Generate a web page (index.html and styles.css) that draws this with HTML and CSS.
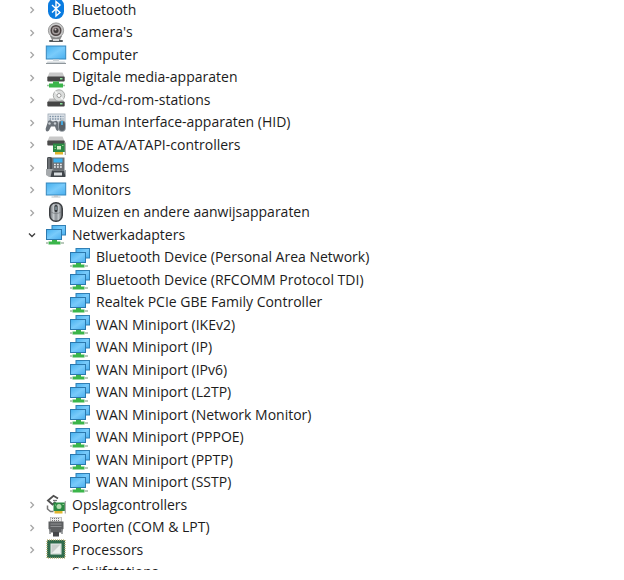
FILE: index.html
```html
<!DOCTYPE html>
<html lang="nl">
<head>
  <meta charset="UTF-8" />
  <meta name="viewport" content="width=device-width, initial-scale=1.0"/>
  <title>Apparaatbeheer</title>
  <link rel="stylesheet" href="styles.css">
</head>
<body>
  <!-- icon shapes, used by the rows below -->
  <svg class="defs" aria-hidden="true">
    <defs>
      <linearGradient id="screen" x1="0" y1="0" x2="1" y2="1">
        <stop offset="0" stop-color="#45b0ee"/>
        <stop offset=".5" stop-color="#79cbfb"/>
        <stop offset="1" stop-color="#48aeee"/>
      </linearGradient>
      <linearGradient id="metal" x1="0" y1="0" x2="0" y2="1">
        <stop offset="0" stop-color="#d4d4d4"/>
        <stop offset="1" stop-color="#8c8c8c"/>
      </linearGradient>
      <linearGradient id="mouseBody" x1="0" y1="0" x2="1" y2="0">
        <stop offset="0" stop-color="#64686c"/>
        <stop offset=".3" stop-color="#c4c9cd"/>
        <stop offset=".5" stop-color="#8b9095"/>
        <stop offset=".7" stop-color="#c0c5c9"/>
        <stop offset="1" stop-color="#5c6064"/>
      </linearGradient>

      <symbol id="chevron-right" viewBox="0 0 12 12">
        <path d="M4.500 3 7.500 6 4.500 9" fill="none" stroke="#a6a6a6" stroke-width="1.300"/>
      </symbol>
      <symbol id="chevron-down" viewBox="0 0 12 12">
        <path d="M3 4.500 6 7.500 9 4.500" fill="none" stroke="#404040" stroke-width="1.400"/>
      </symbol>

      <symbol id="bluetooth" viewBox="0 0 22 22" overflow="visible">
        <rect x="3" y="-1" width="16" height="21" rx="7.500" fill="#0a7be0"/>
        <path d="M7 6l8 7.500-4 3.500V2.500L15 6l-8 7.500" fill="none" stroke="#fff" stroke-width="1.400"/>
      </symbol>

      <symbol id="camera" viewBox="0 0 22 22">
        <path d="M5 14h12l-2 4H7z" fill="#8a8a8a"/>
        <rect x="4" y="18" width="14" height="2" rx="1" fill="#55595c"/>
        <rect x="8" y="17" width="6" height="2" fill="#d5d5d5"/>
        <circle cx="11" cy="8.500" r="7.600" fill="#c9c9c9" stroke="#858585" stroke-width=".8"/>
        <circle cx="11" cy="8.500" r="4.800" fill="#a39c9c" stroke="#4c4444" stroke-width="1.500"/>
        <circle cx="11" cy="8.500" r="2.500" fill="#3d3838"/>
        <circle cx="10.500" cy="7.500" r="1" fill="#c9bdbd"/>
      </symbol>

      <symbol id="computer" viewBox="0 0 22 22">
        <rect x="1.300" y="2" width="19.400" height="13" fill="url(#screen)" stroke="#3687bd"/>
        <rect x="8" y="15.500" width="6" height="1.500" fill="#cfd6da"/>
        <path d="M2.500 17.500h17l1.500 2H1z" fill="#cfd5d9"/>
        <path d="M1 19.500h20" stroke="#8f979c"/>
      </symbol>

      <symbol id="media" viewBox="0 0 22 22">
        <path d="M4.500 5.500h13l2 4.500h-17z" fill="#c9c9c9"/>
        <rect x="2.300" y="9.500" width="17.400" height="5" rx="1" fill="#454545"/>
        <rect x="15" y="11" width="2.500" height="1.500" fill="#8be29b"/>
        <path d="M8 14.500h6v2h4v4h-14v-4h4z" fill="#3bb54a"/>
        <path d="M2 18.500h2M18 18.500h2" stroke="#9bbf9f" stroke-width="1.500"/>
      </symbol>

      <symbol id="dvd" viewBox="0 0 22 22">
        <path d="M4.500 9.500h13l2 4h-17z" fill="#bdbdbd"/>
        <circle cx="14" cy="6.500" r="5.700" fill="#dcdedd" stroke="#a3a5a4" stroke-width=".9"/>
        <path d="M14 6.500 10 2.500M14 6.500l4 4" stroke="#f8f8f8" stroke-width="1.500"/>
        <circle cx="14" cy="6.500" r="2" fill="#fff" stroke="#9b9b9b"/>
        <rect x="2.300" y="12.500" width="17.400" height="5" rx="1" fill="#454545"/>
        <rect x="15" y="14" width="2.500" height="1.500" fill="#8be29b"/>
      </symbol>

      <symbol id="hid" viewBox="0 0 22 22">
        <rect x="3" y="2" width="17" height="8" fill="#e6eaee" stroke="#9aa6b2" stroke-width=".8"/>
        <path d="M4.500 4.500h14M4.500 7h14" stroke="#7b8fa3" stroke-width="1.400" stroke-dasharray="1.600 1"/>
        <path d="M3 9.500c2-2 3-1 4 0h2c2-1.500 3-1 4 1l1 6c0 3-2 3-3 1l-1-3H6l-2 4c-2 2-3.500 1-3.300-2z" fill="#6a7178"/>
        <circle cx="4.500" cy="11.500" r="1.200" fill="#c7cdd2"/>
        <circle cx="10" cy="11.500" r="1.200" fill="#c7cdd2"/>
        <rect x="13.500" y="8.500" width="7" height="11" rx="3.500" fill="#596168" stroke="#a9b0b7" stroke-width=".7"/>
        <path d="M17 9v4" stroke="#45b3ef" stroke-width="1.700"/>
      </symbol>

      <symbol id="ide" viewBox="0 0 22 22">
        <path d="M4.500 2.500h13l2 4.500h-17z" fill="#c9c9c9"/>
        <rect x="2.300" y="6.500" width="17.400" height="5" rx="1" fill="#4b4b4b"/>
        <rect x="8" y="9.500" width="12" height="8.500" fill="#2b8a43"/>
        <path d="M20.300 8.500V21" stroke="#a5a5a5" stroke-width="1.200"/>
        <rect x="12" y="12" width="4" height="3.500" fill="#d5edc9"/>
        <path d="M9.500 12h1.500M9.500 14.500h1.500M17 11.500h1.500" stroke="#91d08c"/>
        <rect x="10" y="18" width="8" height="2.500" fill="#e0b52e"/>
      </symbol>

      <symbol id="modem" viewBox="0 0 22 22">
        <path d="M2.500.5h17v13h-17z" fill="#6b7075"/>
        <rect x="2" y="0" width="5" height="13" rx="1.500" fill="#4b4f53"/>
        <path d="M4 1v11" stroke="#8f9397"/>
        <rect x="8.500" y="1.500" width="9" height="4" fill="#3db0ee"/>
        <path d="M9 7.500h9M9 10h9" stroke="#e9edf0" stroke-width="1.500" stroke-dasharray="1.800 1.200"/>
        <path d="M1 12h6l2 1h12v6l-2 1H4l-3-2z" fill="#a6aaad"/>
        <path d="M7 13.500h12l1.500 6.500h-15z" fill="#41464b"/>
        <rect x="9" y="15.500" width="8" height="3" fill="#d9dde0"/>
      </symbol>

      <symbol id="monitor" viewBox="0 0 22 22">
        <rect x="1.300" y="4" width="19.400" height="12" fill="url(#screen)" stroke="#3687bd"/>
        <path d="M9 16.500h4v1H9z" fill="#a9b1b6"/>
        <path d="M6.500 18h9" stroke="#b8c1c6"/>
      </symbol>

      <symbol id="mouse" viewBox="0 0 22 22">
        <rect x="4.700" y=".7" width="12.600" height="18.600" rx="6" fill="url(#mouseBody)" stroke="#3b3e41" stroke-width="1.400"/>
        <path d="M6 10c3 2 7 2 10 0" fill="none" stroke="#7a7e82" stroke-width=".8"/>
        <rect x="9.500" y="3" width="3" height="7" rx="1.500" fill="#2f3235"/>
        <path d="M11 4.500v3.500" stroke="#b9d6e6"/>
      </symbol>

      <symbol id="network" viewBox="0 0 22 22">
        <rect x="7" y="1.500" width="13.500" height="9.500" fill="url(#screen)" stroke="#3180b5"/>
        <rect x="1.500" y="5.500" width="15" height="10" fill="url(#screen)" stroke="#2c79ae"/>
        <path d="M7 16h5v1.500h3.500v3h-12v-3H7z" fill="#3bb54a"/>
        <path d="M1 19h2.500M15.500 19h3.500" stroke="#b9c9bb" stroke-width="1.800"/>
      </symbol>

      <symbol id="storage" viewBox="0 0 22 22">
        <path d="M13 4.500 8.500 1.800 3 6.500l4.500 4 3-2.500" fill="none" stroke="#505050" stroke-width="1.900"/>
        <path d="M8 6.500h4" stroke="#777" stroke-width="1.300"/>
        <path d="M2.500 11.500v3.500l3 2.500h3" fill="none" stroke="#777" stroke-width="1.500"/>
        <rect x="8.500" y="8.500" width="11.500" height="8.500" fill="#2b8a43"/>
        <path d="M20.300 7v12.500" stroke="#a5a5a5" stroke-width="1.200"/>
        <circle cx="14" cy="12.500" r="2.500" fill="#b6dcb0"/>
        <path d="M10 11h1M17.500 10.500H19" stroke="#91d08c"/>
        <rect x="9.500" y="17" width="8" height="2.500" fill="#e0b52e"/>
      </symbol>

      <symbol id="port" viewBox="0 0 22 22">
        <rect x="5.500" y=".2" width="11" height="4.800" fill="#ededed" stroke="#a5a5a5" stroke-width=".7"/>
        <path d="M7 1.500h8M7 3.500h8" stroke="#777" stroke-dasharray="1 1"/>
        <path d="M3.500 4.500h15v7l-2 4h-11l-2-4z" fill="#5d5f61"/>
        <path d="M5.500 7h11M5.500 9.500h11" stroke="#8e9092"/>
        <path d="M5 12v5M17 12v5" stroke="#85888a" stroke-width="1.500"/>
        <rect x="8" y="15" width="6" height="4.500" fill="#45474a"/>
      </symbol>

      <symbol id="processor" viewBox="0 0 22 22">
        <rect x="2" y="1" width="18" height="18" fill="#396b50" stroke="#bdb67c" stroke-width="1.500" stroke-dasharray="1 1"/>
        <rect x="2.800" y="1.800" width="16.400" height="16.400" fill="#2f6b4b"/>
        <rect x="6" y="5" width="10" height="10" fill="#c9cfcc" stroke="#e6ece9"/>
        <path d="M7 14 15 6v8z" fill="#eef1ef"/>
      </symbol>
    </defs>
  </svg>

  <main class="window">
    <ul class="tree">
      <li><div class="row"><button class="toggle" aria-label="Bluetooth" aria-expanded="false"><svg><use href="#chevron-right"/></svg></button><svg class="icon"><use href="#bluetooth"/></svg><span>Bluetooth</span></div></li>
      <li><div class="row"><button class="toggle" aria-label="Camera's" aria-expanded="false"><svg><use href="#chevron-right"/></svg></button><svg class="icon"><use href="#camera"/></svg><span>Camera's</span></div></li>
      <li><div class="row"><button class="toggle" aria-label="Computer" aria-expanded="false"><svg><use href="#chevron-right"/></svg></button><svg class="icon"><use href="#computer"/></svg><span>Computer</span></div></li>
      <li><div class="row"><button class="toggle" aria-label="Digitale media-apparaten" aria-expanded="false"><svg><use href="#chevron-right"/></svg></button><svg class="icon"><use href="#media"/></svg><span>Digitale media-apparaten</span></div></li>
      <li><div class="row"><button class="toggle" aria-label="Dvd-/cd-rom-stations" aria-expanded="false"><svg><use href="#chevron-right"/></svg></button><svg class="icon"><use href="#dvd"/></svg><span>Dvd-/cd-rom-stations</span></div></li>
      <li><div class="row"><button class="toggle" aria-label="Human Interface-apparaten (HID)" aria-expanded="false"><svg><use href="#chevron-right"/></svg></button><svg class="icon"><use href="#hid"/></svg><span>Human Interface-apparaten (HID)</span></div></li>
      <li><div class="row"><button class="toggle" aria-label="IDE ATA/ATAPI-controllers" aria-expanded="false"><svg><use href="#chevron-right"/></svg></button><svg class="icon"><use href="#ide"/></svg><span>IDE ATA/ATAPI-controllers</span></div></li>
      <li><div class="row"><button class="toggle" aria-label="Modems" aria-expanded="false"><svg><use href="#chevron-right"/></svg></button><svg class="icon"><use href="#modem"/></svg><span>Modems</span></div></li>
      <li><div class="row"><button class="toggle" aria-label="Monitors" aria-expanded="false"><svg><use href="#chevron-right"/></svg></button><svg class="icon"><use href="#monitor"/></svg><span>Monitors</span></div></li>
      <li><div class="row"><button class="toggle" aria-label="Muizen en andere aanwijsapparaten" aria-expanded="false"><svg><use href="#chevron-right"/></svg></button><svg class="icon"><use href="#mouse"/></svg><span>Muizen en andere aanwijsapparaten</span></div></li>
      <li>
        <div class="row"><button class="toggle" aria-label="Netwerkadapters" aria-expanded="true"><svg><use href="#chevron-down"/></svg></button><svg class="icon"><use href="#network"/></svg><span>Netwerkadapters</span></div>
        <ul class="devices">
          <li class="row"><svg class="icon"><use href="#network"/></svg><span>Bluetooth Device (Personal Area Network)</span></li>
          <li class="row"><svg class="icon"><use href="#network"/></svg><span>Bluetooth Device (RFCOMM Protocol TDI)</span></li>
          <li class="row"><svg class="icon"><use href="#network"/></svg><span>Realtek PCIe GBE Family Controller</span></li>
          <li class="row"><svg class="icon"><use href="#network"/></svg><span>WAN Miniport (IKEv2)</span></li>
          <li class="row"><svg class="icon"><use href="#network"/></svg><span>WAN Miniport (IP)</span></li>
          <li class="row"><svg class="icon"><use href="#network"/></svg><span>WAN Miniport (IPv6)</span></li>
          <li class="row"><svg class="icon"><use href="#network"/></svg><span>WAN Miniport (L2TP)</span></li>
          <li class="row"><svg class="icon"><use href="#network"/></svg><span>WAN Miniport (Network Monitor)</span></li>
          <li class="row"><svg class="icon"><use href="#network"/></svg><span>WAN Miniport (PPPOE)</span></li>
          <li class="row"><svg class="icon"><use href="#network"/></svg><span>WAN Miniport (PPTP)</span></li>
          <li class="row"><svg class="icon"><use href="#network"/></svg><span>WAN Miniport (SSTP)</span></li>
        </ul>
      </li>
      <li><div class="row"><button class="toggle" aria-label="Opslagcontrollers" aria-expanded="false"><svg><use href="#chevron-right"/></svg></button><svg class="icon"><use href="#storage"/></svg><span>Opslagcontrollers</span></div></li>
      <li><div class="row"><button class="toggle" aria-label="Poorten (COM &amp; LPT)" aria-expanded="false"><svg><use href="#chevron-right"/></svg></button><svg class="icon"><use href="#port"/></svg><span>Poorten (COM &amp; LPT)</span></div></li>
      <li><div class="row"><button class="toggle" aria-label="Processors" aria-expanded="false"><svg><use href="#chevron-right"/></svg></button><svg class="icon"><use href="#processor"/></svg><span>Processors</span></div></li>
      <li><div class="row last"><span>Schijfstations</span></div></li>
    </ul>
  </main>
</body>
</html>
```
FILE: styles.css
```css
html { font-size: 15px; }
body { margin: 0; background: #fff; color: #1c1c1c; font-family: "Open Sans", "Noto Sans", sans-serif; font-size: 14px; }
ul { list-style: none; margin: 0; padding: 0; }
.defs { display: block; width: 0; height: 0; }

/* the list runs on below the pane, so the last row is cut off */
.window { height: calc(100vh - 10px); overflow: hidden; }
.tree { margin-top: -1px; padding-left: 26px; }
.row { display: flex; align-items: center; height: 1.5rem; white-space: nowrap; }
.row span { padding-bottom: 2px; }
.devices { padding-left: 43px; }
.last { padding-left: 46px; }

.toggle { display: flex; width: 12px; height: 12px; margin-right: 7px; padding: 0; border: 0; background: none; }
.toggle svg { width: 12px; height: 12px; }
.icon { flex: none; width: 22px; height: 22px; margin-right: 5px; overflow: visible; }
```
